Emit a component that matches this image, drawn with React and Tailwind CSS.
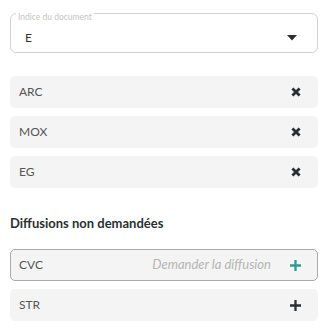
import React from 'react';

const font = { fontFamily: 'Lato, "Noto Sans", sans-serif' };

const XIcon = () => (
  <svg width="10" height="10" viewBox="0 0 10 10" className="text-[#2b2f33]">
    <path d="M1.4 1.4 L8.6 8.6 M8.6 1.4 L1.4 8.6" stroke="currentColor" strokeWidth="2.8" />
  </svg>
);

const PlusIcon = ({ color }) => (
  <svg width="11" height="11" viewBox="0 0 11 11" style={{ color }}>
    <path d="M5.5 0 V11 M0 5.5 H11" stroke="currentColor" strokeWidth="2.3" />
  </svg>
);

const Row = ({ label, children, active }) => (
  <div
    className={
      'flex items-center h-8 rounded-[5px] bg-[#f4f4f4] pl-2 pr-4 ' +
      (active ? 'border border-[#a9a9a9]' : 'border border-transparent')
    }
  >
    <span className="text-[12px] text-[#555]">{label}</span>
    <div className="ml-auto flex items-center gap-[19px]">{children}</div>
  </div>
);

export default function App() {
  return (
    <div className="bg-white w-[333px] h-[327px] pl-[10px] pr-[15px] pt-[13px]" style={font}>
      <div className="relative h-10 border border-[#d2d2d2] rounded-[6px] pl-[14px] pr-5 pt-[9px] flex items-center">
        <span className="absolute left-[5px] top-[-1px] bg-white px-[2px] text-[8.5px] leading-[9px] text-[#c4c4c4]">
          Indice du document
        </span>
        <span className="text-[12px] text-[#333]">E</span>
        <svg className="ml-auto" width="10" height="6" viewBox="0 0 10 6">
          <path d="M0 0 H10 L5 5.5 Z" fill="#2b2f33" />
        </svg>
      </div>

      <div className="mt-[23px] flex flex-col gap-2">
        <Row label="ARC"><XIcon /></Row>
        <Row label="MOX"><XIcon /></Row>
        <Row label="EG"><XIcon /></Row>
      </div>

      <div className="mt-[26px] text-[13px] leading-[18px] font-bold text-[#2b2f33]">Diffusions non demandées</div>

      <div className="mt-[17px] flex flex-col gap-2">
        <Row label="CVC" active>
          <span className="text-[13px] italic text-[#b5b5b5]">Demander la diffusion</span>
          <PlusIcon color="#2a9d8f" />
        </Row>
        <Row label="STR"><PlusIcon color="#2b2f33" /></Row>
      </div>
    </div>
  );
}
